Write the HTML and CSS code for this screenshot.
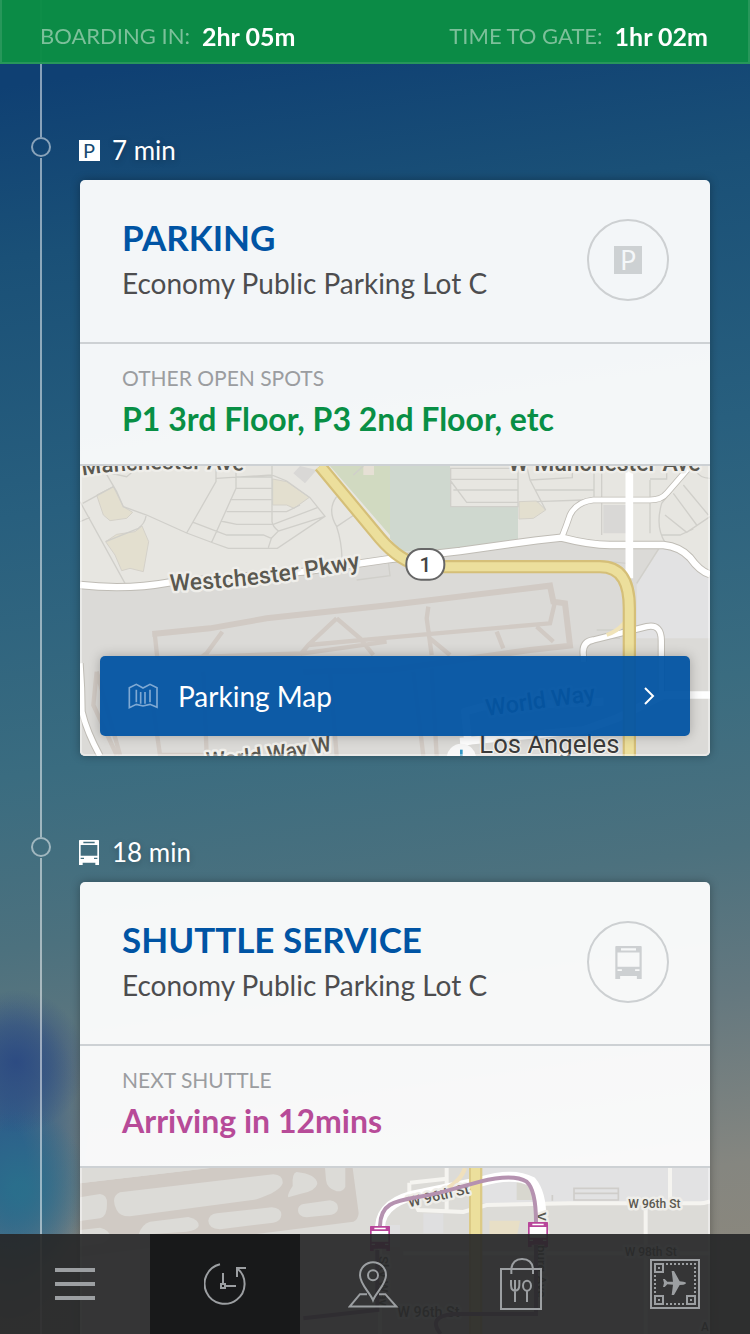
FILE: index.html
```html
<!DOCTYPE html>
<html lang="en">
<head>
<meta charset="utf-8">
<meta name="viewport" content="width=device-width, initial-scale=1">
<title>Trip timeline</title>
<link rel="stylesheet" href="styles.css">
</head>
<body>
<svg class="defs" aria-hidden="true">
  <symbol id="bus" viewBox="0 0 60 75">
    <path fill="currentColor" fill-rule="evenodd" d="M2 0H58Q60 0 60 2V75H49V68H11V75H0V2Q0 0 2 0ZM5 15V47H55V15ZM13 5V10H47V5ZM5 53V57H15V53ZM45 53V57H55V53Z"/>
  </symbol>
</svg>

<header class="status">
  <p class="status-item"><span class="status-label">BOARDING IN:</span> <strong>2hr 05m</strong></p>
  <p class="status-item"><span class="status-label">TIME TO GATE:</span> <strong>1hr 02m</strong></p>
</header>

<main class="screen">
  <div class="lead"></div>
  <ol class="timeline">
    <li class="stop">
      <div class="rail"><span class="node"></span><span class="line"></span></div>
      <div class="stop-body">
        <p class="duration"><span class="duration-icon"><span class="p-sign">P</span></span>7 min</p>
        <article class="card">
          <div class="card-head">
            <div>
              <h2 class="title">PARKING</h2>
              <p class="subtitle">Economy Public Parking Lot C</p>
            </div>
            <div class="badge"><span class="p-sign p-sign-muted">P</span></div>
          </div>
          <div class="card-info">
            <p class="info-label">OTHER OPEN SPOTS</p>
            <p class="info-value">P1 3rd Floor, P3 2nd Floor, etc</p>
          </div>
          <div class="map">
            <svg class="map-art" viewBox="30 33 1890 870" preserveAspectRatio="xMidYMid slice" role="img" aria-label="Map of the area round the parking lot">
              <rect x="30" y="33" width="1890" height="870" fill="#dbdad7"/>
              <path fill="#e7e6e1" d="M30 33H1920V360L1800 270L1480 250L960 312L600 360L170 398L30 388Z"/>
              <path fill="#e2e2e3" d="M1770 280L1850 300L1920 370V550H1700V390Z"/>
              <path fill="#d1dac1" d="M780 33H960V250L990 275Z"/>
              <path fill="#cfd8cf" d="M960 33H1140V155H1344V252L1130 285L990 290L960 250Z"/>
              <path fill="#e6e0d5" d="M880 33H912V60H880Z"/>
              <path fill="#d9d8d6" d="M690 33L740 45L705 85L670 55ZM1600 150H1670V235H1600Z"/>
              <path fill="#e3dfcf" stroke="#d4d1c9" stroke-width="3" d="M80 120L130 95L160 155L188 172L170 190L120 197L100 180ZM107 260L140 238L195 230L216 213L236 260L220 350L180 340L155 347L135 300ZM608 72L650 80L718 127L672 160L650 150H608ZM1347 140L1400 138L1427 165L1390 190L1347 192Z"/>
              <g fill="none" stroke="#d0cfca" stroke-width="4">
                <path d="M105 50L140 110L160 155L230 180L350 234L430 264L475 280H622L765 184L720 128L650 78L605 60L440 70M438 33V80L350 234M498 33V100L425 262M498 66H606M498 100H606M480 134H606M470 170H650L690 150M452 198L500 208H610L742 158M370 202L470 240H580L604 250L595 278M604 250L625 228L765 184M606 33V200Q608 215 625 228M30 140L165 385M38 145L130 95M30 200L60 187M228 183Q225 205 205 220L107 260M110 52L170 65L188 50M800 125Q770 165 800 215Q815 260 816 310M800 215L852 180M880 33L850 60M955 320L960 362L860 375"/>
                <path d="M1142 40H1344V155H1142ZM1142 73H1344M1150 105H1344M1142 78L1190 142H1344M1370 33L1380 75L1507 68V33M1380 75L1427 165M1395 105H1572M1400 140L1540 135M1572 33V125M1595 33V240M1740 75V235M1740 72H1790V33M1850 50L1775 145Q1755 215 1785 262M1810 115L1880 210M1840 90L1915 180M1785 180L1850 232L1920 185M1775 240H1830L1870 222M1875 45Q1890 70 1920 70M1620 320L1670 325M1580 525H1690M1575 550H1650M1700 385L1770 275"/>
              </g>
              <g fill="none" stroke="#d1cac4" stroke-width="13">
                <path stroke-width="18" d="M247 537L420 520L590 490L960 450L1440 392L1450 440L1485 445L1500 572L1380 585L960 645L700 650"/>
                <path d="M254 535L262 610M457 530L410 595L390 610M800 490L715 570L690 600M800 490L870 550L910 600M715 570L930 550L1440 505L1455 440M1075 455L1070 490L1085 600M1080 550L1140 600M1280 530L1300 580M1400 515L1450 560M262 610L700 595L950 560M80 650L150 900M80 650L70 750L140 900M240 690L270 900H410L400 650M1030 650L1060 903M1085 640L1100 903M780 650L800 903"/>
              </g>
              <g fill="none" stroke-linejoin="round">
                <g stroke="#bfbcb5">
                  <path stroke-width="25" d="M30 390Q170 406 300 382L700 350L960 312L1170 288L1400 256L1475 248Q1560 270 1620 270H1780Q1830 275 1860 308Q1890 350 1920 358"/>
                  <path stroke-width="20" d="M1475 248Q1490 210 1500 180Q1520 140 1570 135H1740Q1775 135 1790 115L1855 40"/>
                  <path stroke-width="22" d="M30 625Q36 700 36 770Q50 830 90 903M1540 620V600Q1535 560 1570 555L1730 515Q1775 505 1774 560V720"/>
                </g>
                <g stroke="#fff">
                  <path stroke-width="19" d="M30 390Q170 406 300 382L700 350L960 312L1170 288L1400 256L1475 248Q1560 270 1620 270H1780Q1830 275 1860 308Q1890 350 1920 358"/>
                  <path stroke-width="15" d="M1475 248Q1490 210 1500 180Q1520 140 1570 135H1740Q1775 135 1790 115L1855 40"/>
                  <path stroke-width="16" d="M30 625Q36 700 36 770Q50 830 90 903M1540 620V600Q1535 560 1570 555L1730 515Q1775 505 1774 560V720"/>
                  <path stroke-width="23" d="M1678 33V370M1170 860L1540 825L1640 790L1780 720H1920M1195 870L1185 770L1240 755L1600 740"/>
                </g>
                <path stroke="#f0e3b8" stroke-width="12" d="M1678 460Q1675 515 1610 540"/>
                <path stroke="#d5bf78" stroke-width="40" d="M750 33L930 250Q990 320 1060 335H1590C1660 335 1678 390 1678 460V903"/>
                <path stroke="#ecdf9c" stroke-width="27" d="M750 33L930 250Q990 320 1060 335H1590C1660 335 1678 390 1678 460V903"/>
              </g>
              <circle cx="1174" cy="910" r="44" fill="#f7f7f7"/>
              <path fill="#3296c4" d="M1170 884H1178V903H1170Z"/>
              <defs>
                <path id="westchester" d="M300 408Q600 396 890 336"/>
                <path id="worldway" d="M410 938Q600 928 820 880"/>
                <path id="manchester" d="M38 62Q220 30 580 50"/>
              </defs>
              <g class="map-text">
                <text font-size="70"><textPath href="#westchester">Westchester Pkwy</textPath></text>
                <text font-size="65"><textPath href="#worldway">World Way W</textPath></text>
                <text font-size="67"><textPath href="#manchester">Manchester Ave</textPath></text>
                <text font-size="69" x="1315" y="48">W Manchester Ave</text>
                <text font-size="70" transform="translate(1250 783) rotate(-8)">World Way</text>
                <text class="map-place" font-size="77" x="1228" y="893">Los Angeles</text>
              </g>
              <rect x="1009" y="282" width="114" height="92" rx="44" fill="#fff" stroke="#666" stroke-width="6"/>
              <text class="shield" x="1066" y="350">1</text>
            </svg>
            <button class="map-button" type="button">
              <svg class="map-icon" viewBox="0 0 88 78" aria-hidden="true">
                <path fill="none" stroke="currentColor" stroke-width="5" d="M3 14L24 4L44 15L65 4L86 14V73L65 64L44 69L24 64L3 74ZM24 20V58M37 27V62M50 27V62M65 20V58"/>
              </svg>
              <span>Parking Map</span>
              <svg class="chevron" viewBox="0 0 12 20" aria-hidden="true"><path fill="none" stroke="currentColor" stroke-width="2" d="M2 2L10 10L2 18"/></svg>
            </button>
          </div>
        </article>
      </div>
    </li>

    <li class="stop stop-shuttle">
      <div class="rail"><span class="node"></span><span class="line"></span></div>
      <div class="stop-body">
        <p class="duration"><span class="duration-icon"><svg class="bus-small" aria-hidden="true"><use href="#bus"/></svg></span>18 min</p>
        <article class="card">
          <div class="card-head">
            <div>
              <h2 class="title">SHUTTLE SERVICE</h2>
              <p class="subtitle">Economy Public Parking Lot C</p>
            </div>
            <div class="badge"><svg class="bus-large" aria-hidden="true"><use href="#bus"/></svg></div>
          </div>
          <div class="card-info">
            <p class="info-label">NEXT SHUTTLE</p>
            <p class="info-value info-value-shuttle">Arriving in 12mins</p>
          </div>
          <div class="map">
            <svg class="map-art" viewBox="30 54 1890 870" preserveAspectRatio="xMidYMid slice" role="img" aria-label="Map of the shuttle route">
              <rect x="30" y="54" width="1890" height="870" fill="#dcdbd7"/>
              <path fill="#e2e2e3" d="M1235 54H1920V160H1235Z"/>
              <path fill="#d8d7cf" d="M1340 95H1400V150H1340Z"/>
              <path fill="#dfdfe0" d="M1060 190H1120V250H1060ZM940 225H990V290H940Z"/>
              <path fill="#e8dfc6" d="M1258 212H1350L1340 262H1258Z"/>
              <path fill="#d0cac4" d="M30 100L420 54H848L866 190Q864 210 850 215L560 252L30 320Z"/>
              <g fill="#dcdbd7">
                <path d="M30 54H420L30 100Z"/>
                <path d="M150 127L610 73Q640 75 638 100Q630 125 560 148L180 199Q150 200 140 180Q120 140 150 127Z"/>
                <path d="M30 142L90 132Q112 135 111 160Q112 200 90 205L30 213Z"/>
                <path d="M680 66Q740 72 742 102Q735 125 690 132L655 142Q650 135 668 108Q665 70 680 66Z"/>
                <path d="M765 54H826V110Q820 125 800 124Q770 115 768 90Z"/>
                <path d="M700 162L780 151Q805 155 804 175Q802 190 785 194L710 202Q685 200 684 182Q684 165 700 162Z"/>
                <path d="M440 190L605 172Q635 175 634 195Q632 215 610 218L450 238Q415 235 415 212Q418 193 440 190Z"/>
                <path d="M240 215L355 201Q388 208 386 228Q382 240 350 245L205 255Q215 222 240 215Z"/>
                <path d="M30 240L90 233Q120 240 122 262L100 280L30 290Z"/>
              </g>
              <g fill="none" stroke="#f5f4f0" stroke-width="12">
                <path d="M1130 54V178M1020 98L1130 86M1018 98V130L1045 180L1180 186L1250 165L1500 160H1880Q1905 160 1920 154M1800 54V160M1727 160V552M1000 310H1920M600 660H1920M930 200V552"/>
                <path stroke-width="30" d="M930 230Q935 150 1060 130L1230 95Q1330 65 1385 95Q1415 130 1414 210" stroke="#fff"/>
              </g>
              <path fill="none" stroke="#f0e0bd" stroke-width="13" d="M1185 54Q1170 100 1110 125"/>
              <path fill="#dcca86" d="M1197 54H1237V924H1197Z"/>
              <path fill="#ecdf9c" d="M1203 54H1230V924H1203Z"/>
              <g fill="none" stroke="#cfcdca" stroke-width="5"><path d="M1512 115H1645V150H1512ZM1512 130H1645M1447 135V152"/></g>
              <g class="map-text">
                <text font-size="43" transform="translate(1018 172) rotate(-13)">W 96th St</text>
                <text font-size="36" x="1675" y="174">W 96th St</text>
                <text font-size="36" x="1664" y="318">W 98th St</text>
                <text font-size="43" x="982" y="500">W 96th St</text>
                <text font-size="40" transform="translate(928 318) rotate(90)">Sky Way</text>
                <text font-size="40" transform="translate(1400 187) rotate(90)">Vicksburg Ave</text>
                <text font-size="36" x="1893" y="543">A</text>
              </g>
              <g fill="none" stroke-width="12">
                <path stroke="#b592b0" d="M930 228C932 140 1000 155 1110 128L1230 95Q1330 70 1370 95Q1398 120 1398 216"/>
                <path stroke="#9e6e97" d="M922 300V480L700 505M1398 285V492H1150Q1070 500 1112 552"/>
              </g>
              <path fill="#fff" d="M902 230H958V290H902ZM1376 218H1432V278H1376Z"/>
              <g color="#b8459a">
                <use href="#bus" x="900" y="228" width="60" height="75"/>
                <use href="#bus" x="1374" y="216" width="60" height="75"/>
              </g>
            </svg>
          </div>
        </article>
      </div>
    </li>
  </ol>
</main>

<nav class="tabs" aria-label="Main">
  <button class="tab" type="button" aria-label="Menu">
    <svg width="40" height="32" viewBox="0 0 40 32"><path fill="currentColor" d="M0 0H40V4H0ZM0 14H40V18H0ZM0 28H40V32H0Z"/></svg>
  </button>
  <button class="tab tab-active" type="button" aria-label="Timeline" aria-current="page">
    <svg width="42" height="42" viewBox="402 342 126 126">
      <g fill="none" stroke="currentColor" stroke-width="6">
        <path d="M450 346A60 60 0 1 0 503 359"/>
        <path d="M528 357H501V384M459 372V405M465 411H498"/>
        <path d="M453 405H465V417H453Z"/>
      </g>
    </svg>
  </button>
  <button class="tab" type="button" aria-label="Map">
    <svg width="54" height="47" viewBox="834 336 162 140">
      <g fill="none" stroke="currentColor" stroke-width="6">
        <path d="M909 453C900 430 870 405 870 378A39 39 0 0 1 948 378C948 405 918 430 909 453Z"/>
        <circle cx="909" cy="378" r="15"/>
        <path d="M891 435H870L839 472H979L946 435H927"/>
      </g>
    </svg>
  </button>
  <button class="tab" type="button" aria-label="Food and shops">
    <svg width="50" height="52" viewBox="420 324 150 156">
      <g fill="none" stroke="currentColor" stroke-width="6">
        <path d="M423 357H543V477H423Z"/>
        <path d="M454 372V356Q458 327 486 327Q516 327 519 356V372"/>
        <path d="M453 390V405Q453 422 465 422Q478 422 478 405V390M465 390V456M501 423V456"/>
        <ellipse cx="501" cy="407" rx="12" ry="15"/>
      </g>
    </svg>
  </button>
  <button class="tab" type="button" aria-label="Boarding pass">
    <svg width="50" height="50" viewBox="870 330 150 150">
      <g fill="none" stroke="currentColor" stroke-width="6">
        <path d="M873 333H1017V477H873Z"/>
        <path d="M885 345H909V369H885ZM885 441H909V465H885ZM981 441H1005V465H981Z"/>
        <path stroke-dasharray="6 6" d="M918 345H1008M1005 354V435M918 465H975M885 378V435"/>
      </g>
      <path fill="currentColor" d="M894 354H900V360H894ZM894 450H900V456H894ZM990 450H996V456H990ZM909 390H914L922 398H939L935 366H942L959 397L970 398Q978 399 978 402Q978 405 970 407L959 408L942 438H935L939 407L922 406L914 414H909L912 402Z"/>
    </svg>
  </button>
</nav>
</body>
</html>
```
FILE: styles.css
```css
* {
  box-sizing: border-box;
}

body {
  margin: 0;
  height: 100vh;
  overflow: hidden;
  font-family: Lato, "Open Sans", sans-serif;
  color: #4d4d4f;
  background:
    radial-gradient(ellipse 70px 72px at 16px 1062px, rgba(42, 72, 130, 0.9), rgba(42, 72, 130, 0.55) 50%, rgba(42, 72, 130, 0) 100%),
    radial-gradient(ellipse 72px 80px at 20px 1190px, rgba(42, 112, 140, 0.9) 10%, rgba(42, 112, 140, 0) 100%),
    radial-gradient(ellipse 80px 160px at 10px 1160px, #2e5d8a 20%, rgba(46, 93, 138, 0) 100%),
    linear-gradient(172deg, #0f4073 6%, #1a5077 18%, #285f7e 36%, #3a6c80 54%, #4c717e 66%, #64787f 76%, #858680 88%, #8f887a 100%);
}

h2,
p,
ol {
  margin: 0;
  padding: 0;
}

button {
  font: inherit;
  border: 0;
  cursor: pointer;
}

.defs {
  position: absolute;
  width: 0;
  height: 0;
}

.status {
  position: fixed;
  inset: 0 0 auto;
  z-index: 2;
  display: flex;
  justify-content: space-between;
  align-items: center;
  height: 64px;
  padding: 10px 40px 0 38px;
  border: 2px solid #27975a;
  border-top: 0;
  background: rgba(11, 141, 69, 0.98);
  font-size: 22px;
  line-height: 32px;
}

.status-item {
  display: flex;
  gap: 12px;
  color: #fff;
}

.status-item strong {
  font-size: 25px;
}

.status-label {
  color: #7cc09a;
}

.screen {
  height: 100%;
  overflow-y: auto;
  scrollbar-width: none;
}

.lead {
  width: 2px;
  height: 137px;
  margin-left: 40px;
  background: rgba(255, 255, 255, 0.5);
}

.timeline {
  list-style: none;
}

.stop {
  display: grid;
  grid-template-columns: 78px 1fr;
  padding-right: 40px;
}

.rail {
  display: flex;
  flex-direction: column;
  align-items: flex-start;
  gap: 1px;
}

.node {
  width: 20px;
  height: 20px;
  margin-left: 31px;
  border: 2px solid rgba(255, 255, 255, 0.5);
  border-radius: 50%;
}

.line {
  flex: 1;
  width: 2px;
  margin-left: 40px;
  background: rgba(255, 255, 255, 0.5);
}

.stop-body {
  padding-bottom: 81px;
}

.duration {
  display: flex;
  align-items: center;
  gap: 12px;
  height: 26px;
  margin-bottom: 17px;
  color: #fff;
  font-size: 26px;
  line-height: 26px;
  text-shadow: 0 2px 6px rgba(0, 0, 0, 0.25);
}

.stop-shuttle .duration {
  margin-top: 2px;
}

.duration-icon {
  display: flex;
  justify-content: center;
  width: 22px;
}

.p-sign {
  display: grid;
  place-items: center;
  width: 21px;
  height: 21px;
  background: #fff;
  color: #174a70;
  font-size: 20px;
  line-height: 21px;
  text-shadow: none;
}

.p-sign-muted {
  width: 28px;
  height: 28px;
  background: #cdd1d3;
  color: #f4f7f9;
  font-size: 26px;
  line-height: 28px;
}

.bus-small {
  width: 20px;
  height: 25px;
}

.bus-large {
  width: 27px;
  height: 33px;
}

.card {
  margin-left: 2px;
  overflow: hidden;
  border-radius: 5px;
  background: rgba(255, 255, 255, 0.95);
  box-shadow: 0 0 10px rgba(0, 0, 0, 0.3);
}

.card-head {
  display: flex;
  justify-content: space-between;
  align-items: flex-start;
  padding: 39px 41px 41px 42px;
}

.title {
  color: #0054a4;
  font-size: 35px;
  font-weight: 700;
  line-height: 36px;
}

.subtitle {
  margin-top: 10px;
  font-size: 28px;
  line-height: 36px;
}

.badge {
  display: grid;
  place-items: center;
  width: 82px;
  height: 82px;
  border: 2px solid #cdd0d2;
  border-radius: 50%;
  color: #cdd0d2;
}

.card-info {
  height: 124px;
  padding: 20px 42px 0;
  border: solid #cdd1d4;
  border-width: 2px 0;
}

.info-label {
  color: #9b9da0;
  font-size: 21px;
  line-height: 28px;
}

.info-value {
  margin-top: 7px;
  color: #088f45;
  font-size: 32px;
  font-weight: 700;
  line-height: 40px;
}

.info-value-shuttle {
  color: #b74b98;
}

.map {
  position: relative;
  display: flex;
  align-items: flex-end;
  height: 290px;
  padding: 20px;
}

.map::after {
  content: "";
  position: absolute;
  inset: 0;
  border: solid rgba(255, 255, 255, 0.4);
  border-width: 0 2px 2px;
  border-radius: 0 0 5px 5px;
  pointer-events: none;
}

.map-art {
  position: absolute;
  inset: 0;
  width: 100%;
  height: 100%;
}

.map-text {
  fill: #5a5850;
  stroke: #efeeea;
  stroke-width: 15px;
  stroke-linejoin: round;
  paint-order: stroke;
  font-family: Roboto, sans-serif;
  font-weight: 500;
}

.map-place {
  fill: #3b3b3b;
  stroke-width: 8px;
  font-weight: 400;
}

.shield {
  fill: #444;
  font: 500 62px Roboto, sans-serif;
  text-anchor: middle;
}

.map-button {
  position: relative;
  display: flex;
  flex: 1;
  align-items: center;
  gap: 20px;
  height: 80px;
  padding: 0 35px 0 28px;
  border-radius: 5px;
  background: rgba(0, 83, 163, 0.94);
  box-shadow: 0 0 12px rgba(0, 0, 0, 0.25);
  color: #fff;
  font-size: 28px;
}

.map-icon {
  width: 30px;
  height: 26px;
  color: #7fa9d3;
}

.chevron {
  width: 12px;
  height: 20px;
  margin-left: auto;
}

.tabs {
  position: fixed;
  inset: auto 0 0;
  z-index: 2;
  display: grid;
  grid-template-columns: repeat(5, 1fr);
  height: 100px;
  background: rgba(38, 39, 40, 0.92);
}

.tab {
  display: grid;
  place-items: center;
  padding: 0;
  background: none;
  color: #9c9fa2;
}

.tab-active {
  background: #18191a;
}
```
